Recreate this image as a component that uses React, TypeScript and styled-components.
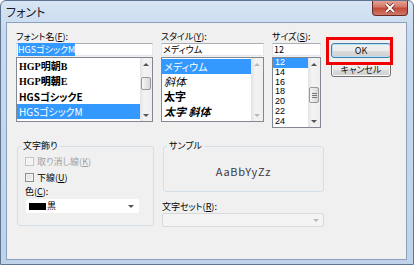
import React from "react";
import styled, { createGlobalStyle } from "styled-components";

const UI = `"Noto Sans CJK JP", "Noto Sans", sans-serif`;
const SERIF = `"Liberation Serif", "Noto Sans CJK JP", serif`;
const DIGITS = `"Liberation Sans", "Noto Sans CJK JP", sans-serif`;

const GlobalStyle = createGlobalStyle`
  html, body { margin: 0; padding: 0; background: #ffffff; }
  body {
    font-family: ${UI};
    font-feature-settings: "palt";
  }
`;

const Window = styled.div`
  width: 414px;
  height: 265px;
  box-sizing: border-box;
  border: 1px solid #5f7491;
  border-radius: 6px 6px 0 0;
  background: linear-gradient(180deg, #d7e5f4 0%, #c8daee 12%, #bed3ea 100%);
  display: flex;
  flex-direction: column;
  font-family: ${UI};
  font-size: 9px;
  color: #000;
  overflow: hidden;
`;

const TitleBar = styled.div`
  height: 21px;
  flex: none;
  display: flex;
  justify-content: space-between;
  align-items: flex-start;
`;

const Title = styled.div`
  padding: 4px 0 0 5px;
  font-size: 12px;
  line-height: 14px;
  color: #1b1b2b;
`;

const CloseButton = styled.div`
  width: 36px;
  height: 16px;
  margin: -1px 5px 0 0;
  box-sizing: border-box;
  border: 1px solid #6a2b25;
  border-top: none;
  border-radius: 0 0 4px 4px;
  background: linear-gradient(180deg, #e6a99d 0%, #d57866 45%, #c24a36 55%, #cf7a69 100%);
  display: flex;
  align-items: center;
  justify-content: center;
`;

const Client = styled.div`
  flex: 1;
  margin: 0 6px 4px 5px;
  border: 1px solid #8aa0bc;
  background: #f0f0f0;
  padding: 7px 0 0 9px;
  box-sizing: border-box;
  display: flex;
  flex-direction: column;
`;

const TopRow = styled.div`
  display: flex;
  align-items: flex-start;
`;

const Column = styled.div<{ $w: number; $gap: number }>`
  width: ${(p) => p.$w}px;
  margin-right: ${(p) => p.$gap}px;
  flex: none;
  display: flex;
  flex-direction: column;
`;

const Label = styled.div<{ $dim?: boolean }>`
  height: 13px;
  line-height: 13px;
  white-space: nowrap;
  color: ${(p) => (p.$dim ? "#a0a0a0" : "#000")};
`;

const TextInput = styled.div`
  height: 13px;
  box-sizing: border-box;
  border: 1px solid #abadb3;
  border-color: #abadb3 #e3e9ef #e3e9ef #e2e3ea;
  background: #fff;
  padding: 0 1px;
  line-height: 11px;
  white-space: nowrap;
  margin-bottom: 1px;
`;

const Selection = styled.span`
  background: #3399ff;
  color: #fff;
`;

const ListBox = styled.div<{ $h: number }>`
  height: ${(p) => p.$h}px;
  box-sizing: border-box;
  border: 1px solid #828790;
  background: #fff;
  display: flex;
  overflow: hidden;
`;

const Items = styled.div<{ $pt: number }>`
  flex: 1;
  padding-top: ${(p) => p.$pt}px;
  overflow: hidden;
`;

const Item = styled.div<{
  $h: number;
  $sel?: boolean;
  $family?: string;
  $weight?: number;
  $italic?: boolean;
  $size: number;
}>`
  height: ${(p) => p.$h}px;
  line-height: ${(p) => p.$h}px;
  padding-left: 2px;
  white-space: nowrap;
  overflow: hidden;
  font-family: ${(p) => p.$family || UI};
  font-weight: ${(p) => p.$weight || 400};
  font-style: ${(p) => (p.$italic ? "italic" : "normal")};
  font-size: ${(p) => p.$size}px;
  background: ${(p) => (p.$sel ? "#3399ff" : "transparent")};
  color: ${(p) => (p.$sel ? "#fff" : "#000")};
`;

const ScrollTrack = styled.div`
  width: 12px;
  flex: none;
  display: flex;
  flex-direction: column;
  background: linear-gradient(90deg, #e3e3e3 0%, #f3f3f3 35%, #efefef 100%);
`;

const ArrowBox = styled.div`
  height: 12px;
  flex: none;
  display: flex;
  align-items: center;
  justify-content: center;
`;

const Arrow = styled.span<{ $down?: boolean; $dim?: boolean }>`
  width: 0;
  height: 0;
  border-left: 3px solid transparent;
  border-right: 3px solid transparent;
  ${(p) =>
    p.$down
      ? `border-top: 3px solid ${p.$dim ? "#b8b8b8" : "#555"};`
      : `border-bottom: 3px solid ${p.$dim ? "#b8b8b8" : "#555"};`}
`;

const TrackMid = styled.div`
  flex: 1;
`;

const Thumb = styled.div<{ $top: number; $h: number }>`
  margin: ${(p) => p.$top}px 1px 0;
  height: ${(p) => p.$h}px;
  box-sizing: border-box;
  border: 1px solid #979797;
  border-radius: 2px;
  background: linear-gradient(90deg, #f6f6f6 0%, #e6e6e6 50%, #d8d8d8 100%);
  display: flex;
  align-items: center;
  justify-content: center;
`;

const Grip = styled.div`
  width: 5px;
  height: 5px;
  background: repeating-linear-gradient(180deg, #777 0 1px, transparent 1px 2px);
`;

const ButtonCol = styled.div`
  padding: 13px 0 0 10px;
  display: flex;
  flex-direction: column;
  gap: 4px;
`;

const Button = styled.div<{ $focused?: boolean }>`
  position: relative;
  width: 60px;
  height: 15px;
  box-sizing: border-box;
  border: 1px solid ${(p) => (p.$focused ? "#3c7fb1" : "#707070")};
  border-radius: 3px;
  background: linear-gradient(180deg, #f2f2f2 0%, #ebebeb 50%, #dddddd 51%, #cfcfcf 100%);
  box-shadow: ${(p) => (p.$focused ? "inset 0 0 0 1px #b8e0f6" : "inset 0 0 0 1px #fbfbfb")};
  display: flex;
  align-items: center;
  justify-content: center;
  line-height: 13px;
  color: #111;
`;

const Highlight = styled.div`
  position: absolute;
  top: -7px;
  left: -6px;
  right: -3px;
  bottom: -8px;
  border: 3px solid #f00000;
  z-index: 2;
  pointer-events: none;
`;

const BottomRow = styled.div`
  display: flex;
  align-items: flex-start;
  margin-top: 12px;
`;

const Group = styled.fieldset<{ $w: number; $h: number; $ml: number }>`
  margin: 0 0 0 ${(p) => p.$ml}px;
  width: ${(p) => p.$w}px;
  height: ${(p) => p.$h}px;
  box-sizing: border-box;
  padding: 1px 7px 0 7px;
  border: 1px solid #d5dfe5;
  border-radius: 3px;
  min-width: 0;
`;

const Legend = styled.legend`
  padding: 0 2px;
  margin-left: -4px;
  font-size: 9px;
  line-height: 12px;
  color: #000;
`;

const CheckRow = styled.div<{ $dim?: boolean }>`
  height: 16px;
  display: flex;
  align-items: center;
  gap: 3px;
  color: ${(p) => (p.$dim ? "#a0a0a0" : "#000")};
`;

const CheckBox = styled.span<{ $dim?: boolean }>`
  width: 9px;
  height: 9px;
  box-sizing: border-box;
  border: 1px solid ${(p) => (p.$dim ? "#c4c4c4" : "#8e8f8f")};
  background: ${(p) =>
    p.$dim ? "#f4f4f4" : "linear-gradient(135deg, #dcdcdc 0%, #f6f6f6 100%)"};
  box-shadow: inset 0 0 0 1px ${(p) => (p.$dim ? "#f8f8f8" : "#f4f4f4")};
`;

const ColorLabel = styled.div`
  height: 14px;
  line-height: 14px;
`;

const Select = styled.div<{ $w: number; $ml: number; $disabled?: boolean }>`
  width: ${(p) => p.$w}px;
  margin-left: ${(p) => p.$ml}px;
  height: 14px;
  box-sizing: border-box;
  border: 1px solid ${(p) => (p.$disabled ? "#d9d9d9" : "#ffffff")};
  border-radius: 2px;
  background: ${(p) => (p.$disabled ? "#f4f4f4" : "#fff")};
  display: flex;
  align-items: center;
  padding: 0 4px 0 2px;
`;

const Swatch = styled.span`
  width: 17px;
  height: 7px;
  background: #000;
  margin-right: 1px;
`;

const SelectText = styled.span`
  flex: 1;
  line-height: 12px;
  font-size: 9px;
`;

const RightCol = styled.div`
  width: 162px;
  margin-left: 8px;
  display: flex;
  flex-direction: column;
`;

const SampleText = styled.div`
  height: 32px;
  display: flex;
  align-items: center;
  justify-content: center;
  font-family: ${UI};
  font-size: 11px;
  letter-spacing: 0.7px;
  color: #3a3a44;
  padding-top: 2px;
`;

const CharsetLabel = styled(Label)`
  margin-top: 8px;
`;

const fonts = [
  { label: "HGP明朝B", family: SERIF, weight: 700 },
  { label: "HGP明朝E", family: SERIF, weight: 900 },
  { label: "HGSゴシックE", family: UI, weight: 700 },
  { label: "HGSゴシックM", family: UI, weight: 400, sel: true },
];

const styles = [
  { label: "メディウム", weight: 400, sel: true },
  { label: "斜体", weight: 400, italic: true },
  { label: "太字", weight: 700 },
  { label: "太字 斜体", weight: 700, italic: true },
];

const sizes = ["12", "14", "16", "18", "20", "22", "24"];

const Scrollbar = ({
  dim,
  thumbTop,
  thumbH,
  grip,
}: {
  dim?: boolean;
  thumbTop?: number;
  thumbH?: number;
  grip?: boolean;
}) => (
  <ScrollTrack>
    <ArrowBox>
      <Arrow $dim={dim} />
    </ArrowBox>
    <TrackMid>
      {thumbH ? (
        <Thumb $top={thumbTop || 0} $h={thumbH}>
          {grip ? <Grip /> : null}
        </Thumb>
      ) : null}
    </TrackMid>
    <ArrowBox>
      <Arrow $down $dim={dim} />
    </ArrowBox>
  </ScrollTrack>
);

export default function App() {
  return (
    <>
      <GlobalStyle />
      <Window>
        <TitleBar>
          <Title>フォント</Title>
          <CloseButton>
            <svg width="12" height="10" viewBox="0 0 12 10">
              <path d="M2 1 L10 9 M10 1 L2 9" stroke="#5a1d17" strokeWidth="3.2" />
              <path d="M2 1 L10 9 M10 1 L2 9" stroke="#ffffff" strokeWidth="2" />
            </svg>
          </CloseButton>
        </TitleBar>
        <Client>
          <TopRow>
            <Column $w={137} $gap={8}>
              <Label>
                フォント名(<u>F</u>):
              </Label>
              <TextInput>
                <Selection>HGSゴシックM</Selection>
              </TextInput>
              <ListBox $h={65}>
                <Items $pt={1}>
                  {fonts.map((f) => (
                    <Item key={f.label} $h={15} $size={10} $family={f.family} $weight={f.weight} $sel={f.sel}>
                      {f.label}
                    </Item>
                  ))}
                </Items>
                <Scrollbar thumbTop={7} thumbH={13} />
              </ListBox>
            </Column>
            <Column $w={103} $gap={8}>
              <Label>
                スタイル(<u>Y</u>):
              </Label>
              <TextInput>メディウム</TextInput>
              <ListBox $h={65}>
                <Items $pt={1}>
                  {styles.map((s) => (
                    <Item
                      key={s.label}
                      $h={15}
                      $size={s.sel ? 10 : 11}
                      $weight={s.weight}
                      $italic={s.italic}
                      $sel={s.sel}
                    >
                      {s.label}
                    </Item>
                  ))}
                </Items>
                <Scrollbar dim />
              </ListBox>
            </Column>
            <Column $w={49} $gap={0}>
              <Label>
                サイズ(<u>S</u>):
              </Label>
              <TextInput>12</TextInput>
              <ListBox $h={71}>
                <Items $pt={0}>
                  {sizes.map((s, i) => (
                    <Item key={s} $h={9.8} $size={9} $family={DIGITS} $sel={i === 0}>
                      {s}
                    </Item>
                  ))}
                </Items>
                <Scrollbar thumbTop={17} thumbH={16} grip />
              </ListBox>
            </Column>
            <ButtonCol>
              <Button $focused>
                OK
                <Highlight />
              </Button>
              <Button>キャンセル</Button>
            </ButtonCol>
          </TopRow>
          <BottomRow>
            <Group $w={137} $h={86} $ml={1}>
              <Legend>文字飾り</Legend>
              <CheckRow $dim>
                <CheckBox $dim />
                <span>
                  取り消し線(<u>K</u>)
                </span>
              </CheckRow>
              <CheckRow>
                <CheckBox />
                <span>
                  下線(<u>U</u>)
                </span>
              </CheckRow>
              <ColorLabel>
                色(<u>C</u>):
              </ColorLabel>
              <Select $w={113} $ml={1}>
                <Swatch />
                <SelectText>黒</SelectText>
                <Arrow $down />
              </Select>
            </Group>
            <RightCol>
              <Group $w={161} $h={52} $ml={1}>
                <Legend>サンプル</Legend>
                <SampleText>AaBbYyZz</SampleText>
              </Group>
              <CharsetLabel>
                文字セット(<u>R</u>):
              </CharsetLabel>
              <Select $w={162} $ml={0} $disabled>
                <SelectText />
                <Arrow $down $dim />
              </Select>
            </RightCol>
          </BottomRow>
        </Client>
      </Window>
    </>
  );
}
